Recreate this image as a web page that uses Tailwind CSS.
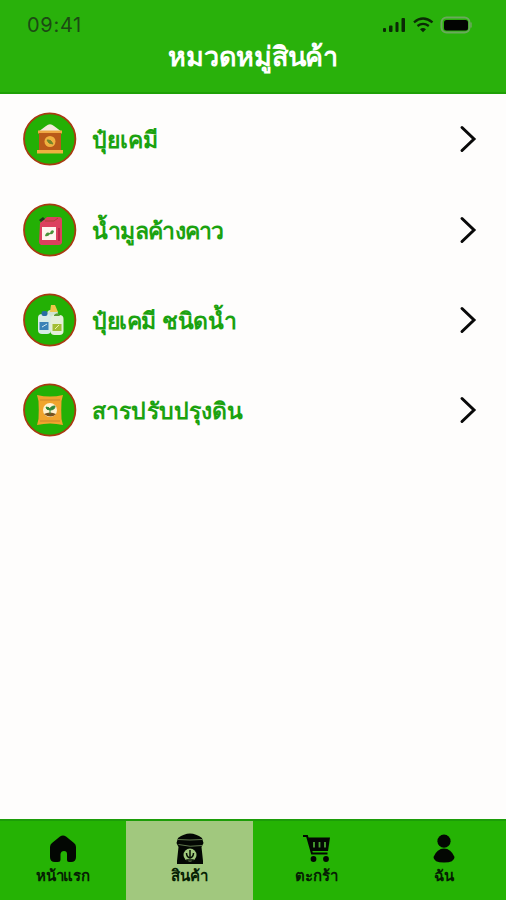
<!DOCTYPE html>
<html lang="th">
<head>
<meta charset="utf-8">
<title>หมวดหมู่สินค้า</title>
<script src="https://cdn.jsdelivr.net/npm/@tailwindcss/browser@4"></script>
</head>
<body class="bg-[#fefdfc]">
<div class="w-[506px] h-[900px] flex flex-col overflow-hidden font-['Liberation_Sans',sans-serif]">
  <header class="h-[94px] shrink-0 bg-[#29b10b] border-b-2 border-[#1fa006]">
    <div class="flex items-center justify-between h-[50px] pl-[27px] pr-[34px]">
      <span class="font-['Inter',sans-serif] text-[20px] leading-[50px] tracking-[0.7px] text-[#1c4a14]">09:41</span>
      <svg class="w-[90px] h-[20px]" viewBox="382 15 90 20" fill="none">
        <g fill="#0b2a06"><rect x="383" y="28" width="3" height="4" rx="1"/><rect x="389" y="25.500" width="3.500" height="6.500" rx="1"/><rect x="395.500" y="22" width="3" height="10" rx="1"/><rect x="401.500" y="18" width="3.500" height="14" rx="1"/></g>
        <path d="M414 22.300Q423 14.700 432.500 22.300M417.500 26Q423 21.800 428.800 26" stroke="#0b2a06" stroke-width="2.300"/>
        <path d="M420 29.200Q423 27 426 29.200L423 32.300Z" fill="#0b2a06"/>
        <rect x="441.500" y="17.500" width="28" height="15" rx="5" stroke="#6aa95c" stroke-width="2"/>
        <path d="M471 22.500v5" stroke="#6aa95c" stroke-width="1.500"/>
        <rect x="444" y="20" width="24" height="10.500" rx="2.500" fill="#020402"/>
      </svg>
    </div>
    <h1 class="-mt-[11px] h-[36px] text-center text-[27px] leading-[36px] tracking-[-0.25px] font-bold text-white">หมวดหมู่สินค้า</h1>
  </header>
  <main class="flex-1">
    <a class="h-[90.400px] flex items-center pl-[23px] pr-[28px] text-[#1ba20f]">
      <svg class="w-[54px] h-[54px] shrink-0" viewBox="0 0 54 54"><circle cx="26.700" cy="27" r="25.700" fill="#23b005" stroke="#a83b12" stroke-width="1.800"/>
        <path d="M15 20L23 14Q27 10.500 31 14L39 20Z" fill="#f2e9dc"/><path d="M15 18.500h24v3H15Z" fill="#efa843"/><path d="M16 21h22v18H16Z" fill="#b95a19"/><path d="M14 38h26v3.500H14Z" fill="#f0b13f"/><circle cx="27" cy="29.500" r="5.500" fill="#f0b13f"/><path d="M24 28q4-1 6 4q-5 0-6-4Z" fill="#73852a" stroke="#73852a"/></svg>
      <span class="ml-[15px] pt-[2px] text-[23px] leading-[36px] font-semibold">ปุ๋ยเคมี</span>
      <svg class="ml-auto w-[20px] h-[32px]" viewBox="0 0 20 32"><path d="M4 4.500L16 16L4 27.500" fill="none" stroke="#090909" stroke-width="3" stroke-linecap="round"/></svg>
    </a>
    <a class="h-[90.400px] flex items-center pl-[23px] pr-[28px] text-[#1ba20f]">
      <svg class="w-[54px] h-[54px] shrink-0" viewBox="0 0 54 54"><circle cx="26.700" cy="27" r="25.700" fill="#23b005" stroke="#a83b12" stroke-width="1.800"/>
        <path d="M17 20L24 14H36Q39 14 39 17V40Q38 42 36 42H18Q16 41 16 39Z" fill="#dc405e"/><path d="M22 18h9l4-3" fill="none" stroke="#a94334"/><path d="M16 17l4-3 2 2-4 3Z" fill="#183b1b"/><path d="M19 24h14v13H19Z" fill="#fff3ef"/><path d="M22 33q1-5 5-3q1-4 4-2q-1 4-4 3q-2 3-5 2Z" fill="#4a933a"/><path d="M36 25v13" stroke="#bd2748" stroke-width="2"/></svg>
      <span class="ml-[15px] pt-[2px] text-[23px] leading-[36px] tracking-[-0.7px] font-semibold">น้ำมูลค้างคาว</span>
      <svg class="ml-auto w-[20px] h-[32px]" viewBox="0 0 20 32"><path d="M4 4.500L16 16L4 27.500" fill="none" stroke="#090909" stroke-width="3" stroke-linecap="round"/></svg>
    </a>
    <a class="h-[90.400px] flex items-center pl-[23px] pr-[28px] text-[#1ba20f]">
      <svg class="w-[54px] h-[54px] shrink-0" viewBox="0 0 54 54"><circle cx="26.700" cy="27" r="25.700" fill="#23b005" stroke="#a83b12" stroke-width="1.800"/>
        <rect x="24" y="17" width="11" height="16" rx="4" fill="#cfe3cf"/><path d="M28 12h4l3 7h-8Z" fill="#eec64c"/><rect x="15" y="21" width="13" height="20" rx="4" fill="#d7ebe6"/><rect x="27.500" y="22" width="13" height="20" rx="4" fill="#e4efda"/><rect x="18.500" y="18" width="6" height="5" rx="2" fill="#286da3"/><path d="M31 22q4-4 6 1h-6Z" fill="#5b9c35"/><rect x="16.500" y="29" width="9" height="8" fill="#3b82b7"/><path d="M19 34l5-3" stroke="#cde8ee"/><rect x="29.500" y="31" width="9" height="7" fill="#a1be35"/><path d="M32 36l4-4" stroke="#ecf1ac"/></svg>
      <span class="ml-[15px] pt-[2px] text-[23px] leading-[36px] tracking-[-0.4px] font-semibold">ปุ๋ยเคมี ชนิดน้ำ</span>
      <svg class="ml-auto w-[20px] h-[32px]" viewBox="0 0 20 32"><path d="M4 4.500L16 16L4 27.500" fill="none" stroke="#090909" stroke-width="3" stroke-linecap="round"/></svg>
    </a>
    <a class="h-[90.400px] flex items-center pl-[23px] pr-[28px] text-[#1ba20f]">
      <svg class="w-[54px] h-[54px] shrink-0" viewBox="0 0 54 54"><circle cx="26.700" cy="27" r="25.700" fill="#23b005" stroke="#a83b12" stroke-width="1.800"/>
        <path d="M14 12Q27 15 40 12L38.500 18Q38 27 38.500 36L40 42Q27 39 14 42L15.500 36Q16 27 15.500 18Z" fill="#f0a42d"/><path d="M17 17H37M17 38H37" stroke="#cc8428"/><circle cx="27" cy="27" r="7" fill="#fff2cf"/><path d="M21 31q6-3 12 0q-5 5-12 0Z" fill="#76501e"/><path d="M27 31v-6m0 2q-4 0-4-3q4 0 4 3q0-4 5-4q0 4-5 4" fill="#318737" stroke="#318737"/></svg>
      <span class="ml-[15px] pt-[2px] text-[23px] leading-[36px] tracking-[0.15px] font-semibold">สารปรับปรุงดิน</span>
      <svg class="ml-auto w-[20px] h-[32px]" viewBox="0 0 20 32"><path d="M4 4.500L16 16L4 27.500" fill="none" stroke="#090909" stroke-width="3" stroke-linecap="round"/></svg>
    </a>
  </main>
  <nav class="h-[81px] shrink-0 grid grid-cols-[126px_127px_127px_126px] bg-[#25b304] border-t-2 border-[#1c9d08] text-[#061e03] text-[15px] leading-[22px] tracking-[-0.1px] font-semibold">
    <a class="flex flex-col items-center pt-[12px]">
      <svg class="w-[30px] h-[32px]" viewBox="0 0 30 32"><path d="M2 14Q2 11.500 4 10L12 3.500Q15 1.500 18 3.500L26 10Q28 11.500 28 14V24Q28 29 23 29H21Q19 29 19 27V21Q19 18 16 18T12.500 21V27Q12.500 29 10 29H7Q2 29 2 24Z" fill="#030703"/></svg>
      <span>หน้าแรก</span>
    </a>
    <a class="flex flex-col items-center pt-[12px] bg-[#a1c87e]">
      <svg class="w-[30px] h-[32px]" viewBox="0 0 30 32"><path d="M3 5Q9 0.500 15 0.500T27 5L28.500 10L26.500 14L28 28V31H2V28L3.500 14L1.500 10Z" fill="#030703"/><path d="M3 6.500Q15 7.500 27 6.500M3.500 11.500Q15 14.500 27 12.500" fill="none" stroke="#60774d" stroke-width="1"/><circle cx="15" cy="22" r="6.500" fill="#a1c87e"/><path d="M15 17v8M11.500 20q0 4 3.500 5q3.500-1 3.500-5M12 29v-2h6v2" fill="none" stroke="#071105" stroke-width="1.500"/></svg>
      <span>สินค้า</span>
    </a>
    <a class="flex flex-col items-center pt-[12px]">
      <svg class="w-[30px] h-[32px]" viewBox="0 0 30 32" fill="none"><path d="M1 3H5L10 20.500H25.500" stroke="#030703" stroke-width="2"/><path d="M6 4.500H28L26 18H9Z" fill="#030703"/><path d="M12 9v5.500M17.500 9v5.500M23 9v5.500" stroke="#4aa532" stroke-width="1.800"/><circle cx="11.500" cy="26" r="2.900" fill="#030703"/><circle cx="24" cy="26" r="2.900" fill="#030703"/></svg>
      <span>ตะกร้า</span>
    </a>
    <a class="flex flex-col items-center pt-[12px] pl-[2px]">
      <svg class="w-[30px] h-[32px]" viewBox="0 0 30 32" fill="#030703"><circle cx="15" cy="8.200" r="6.600"/><path d="M15 15.500Q22 15.500 25.500 24Q25.500 29.500 15 29.500T4.500 24Q8 15.500 15 15.500Z"/></svg>
      <span>ฉัน</span>
    </a>
  </nav>
</div>
</body>
</html>
